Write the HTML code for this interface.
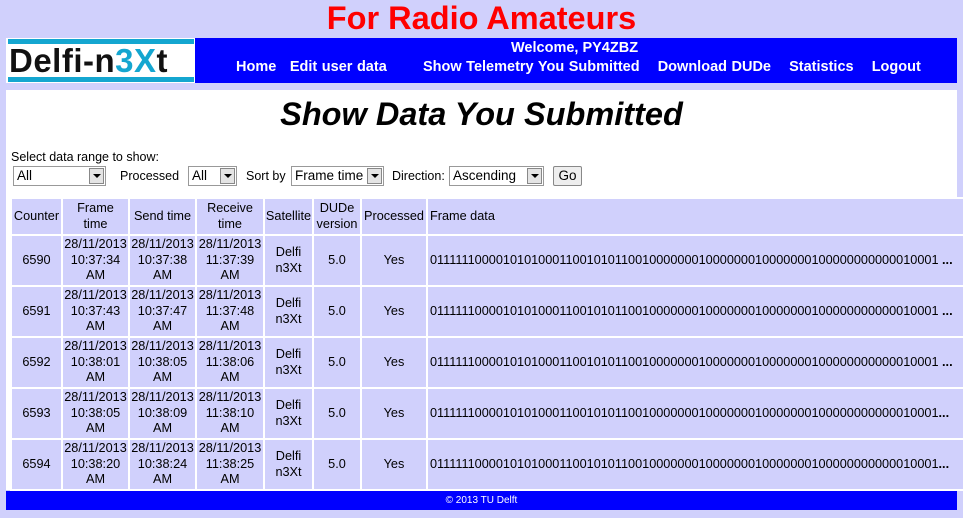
<!DOCTYPE html>
<html><head><meta charset="utf-8"><style>
body{margin:0;width:963px;height:518px;overflow:hidden;background:#d0d0fc;font-family:"Liberation Sans",Arial,sans-serif;position:relative}
.abs{position:absolute}
#title{left:0;width:963px;top:0;text-align:center;color:#f00;font-weight:bold;font-size:32.5px;line-height:36px}
#logo{left:6px;top:38px;width:189px;height:45px;background:#fff;overflow:hidden}
#logo .bar{position:absolute;left:2px;width:186px;height:5px;background:#14a6d0}
#logo .txt{position:absolute;left:3px;top:3px;font-size:33px;font-weight:bold;line-height:40px;color:#111;letter-spacing:0.5px}
#nav{left:195px;top:38px;width:762px;height:45px;background:#0000ff;color:#fff;font-weight:bold;font-size:14.5px}
#panel{left:6px;top:90px;width:951px;height:400px;background:#fff}
h1{position:absolute;left:0;width:963px;top:96px;margin:0;text-align:center;font-size:32.5px;font-style:italic;font-weight:bold;line-height:36px}
.sel{position:absolute;top:166px;height:20px;border:1px solid #999;background:#fff;font-size:13.5px;line-height:18px;padding-left:3px;box-sizing:border-box}
.sel i{position:absolute;right:1px;top:1px;width:15px;height:16px;background:#e4e4e4;border:1px solid #888;box-sizing:border-box}
.sel i:after{content:"";position:absolute;left:3px;top:5px;border-left:4px solid transparent;border-right:4px solid transparent;border-top:4px solid #000}
.lbl{position:absolute;top:169px;font-size:12.5px}
table{position:absolute;left:10px;top:197px;width:1000px;border-collapse:separate;border-spacing:2px;font-size:12.7px;background:#fff;table-layout:fixed}
td{background:#d0d0fc;text-align:center;line-height:15.5px;padding:0;overflow:hidden;white-space:nowrap}
tr.h td{height:35px}
tr.r td{height:49px}
td.fd{text-align:left;padding-left:2px}
#foot{left:6px;top:491px;width:951px;height:19px;background:#00f;color:#fff;font-size:10px;text-align:center;line-height:19px}
</style></head><body>
<div id="title" class="abs">For Radio Amateurs</div>
<div id="logo" class="abs"><div class="bar" style="top:1px"></div><div class="bar" style="top:39px"></div><div class="txt">Delfi-n<span style="color:#14a6d0">3X</span>t</div></div>
<div id="nav" class="abs">
<div class="abs" style="left:316px;top:2px">Welcome, PY4ZBZ</div>
<div class="abs" style="left:41px;top:21px;white-space:nowrap;word-spacing:0.5px">Home&nbsp;&nbsp;&nbsp;Edit user data&nbsp;&nbsp;&nbsp;&nbsp;&nbsp;&nbsp;&nbsp;&nbsp;Show Telemetry You Submitted&nbsp;&nbsp;&nbsp;&nbsp;Download DUDe&nbsp;&nbsp;&nbsp;&nbsp;Statistics&nbsp;&nbsp;&nbsp;&nbsp;Logout</div>
</div>
<div id="panel" class="abs"></div>
<h1>Show Data You Submitted</h1>
<div class="lbl" style="top:150px;left:11px">Select data range to show:</div>
<div class="sel" style="left:13px;width:93px">All<i></i></div>
<div class="lbl" style="left:120px">Processed</div>
<div class="sel" style="left:188px;width:49px">All<i></i></div>
<div class="lbl" style="left:246px">Sort by</div>
<div class="sel" style="left:291px;width:93px">Frame time<i></i></div>
<div class="lbl" style="left:392px">Direction:</div>
<div class="sel" style="left:449px;width:95px">Ascending<i></i></div>
<div class="abs" style="left:553px;top:166px;width:29px;height:20px;border:1px solid #888;border-radius:2px;background:#eee;font-size:13.5px;text-align:center;line-height:18px;box-sizing:border-box">Go</div>
<table>
<colgroup><col style="width:49px"><col style="width:65px"><col style="width:65px"><col style="width:66px"><col style="width:47px"><col style="width:46px"><col style="width:64px"><col></colgroup>
<tr class="h"><td>Counter</td><td>Frame<br>time</td><td>Send time</td><td>Receive<br>time</td><td>Satellite</td><td>DUDe<br>version</td><td>Processed</td><td class="fd">Frame data</td></tr>
<tr class="r"><td>6590</td><td>28/11/2013<br>10:37:34<br>AM</td><td>28/11/2013<br>10:37:38<br>AM</td><td>28/11/2013<br>11:37:39<br>AM</td><td>Delfi<br>n3Xt</td><td>5.0</td><td>Yes</td><td class="fd">0111111000010101000110010101100100000001000000010000000100000000000010001 <b>...</b></td></tr>
<tr class="r"><td>6591</td><td>28/11/2013<br>10:37:43<br>AM</td><td>28/11/2013<br>10:37:47<br>AM</td><td>28/11/2013<br>11:37:48<br>AM</td><td>Delfi<br>n3Xt</td><td>5.0</td><td>Yes</td><td class="fd">0111111000010101000110010101100100000001000000010000000100000000000010001 <b>...</b></td></tr>
<tr class="r"><td>6592</td><td>28/11/2013<br>10:38:01<br>AM</td><td>28/11/2013<br>10:38:05<br>AM</td><td>28/11/2013<br>11:38:06<br>AM</td><td>Delfi<br>n3Xt</td><td>5.0</td><td>Yes</td><td class="fd">0111111000010101000110010101100100000001000000010000000100000000000010001 <b>...</b></td></tr>
<tr class="r"><td>6593</td><td>28/11/2013<br>10:38:05<br>AM</td><td>28/11/2013<br>10:38:09<br>AM</td><td>28/11/2013<br>11:38:10<br>AM</td><td>Delfi<br>n3Xt</td><td>5.0</td><td>Yes</td><td class="fd">0111111000010101000110010101100100000001000000010000000100000000000010001<b>...</b></td></tr>
<tr class="r"><td>6594</td><td>28/11/2013<br>10:38:20<br>AM</td><td>28/11/2013<br>10:38:24<br>AM</td><td>28/11/2013<br>11:38:25<br>AM</td><td>Delfi<br>n3Xt</td><td>5.0</td><td>Yes</td><td class="fd">0111111000010101000110010101100100000001000000010000000100000000000010001<b>...</b></td></tr>
</table>
<div id="foot" class="abs">© 2013 TU Delft</div>
</body></html>
